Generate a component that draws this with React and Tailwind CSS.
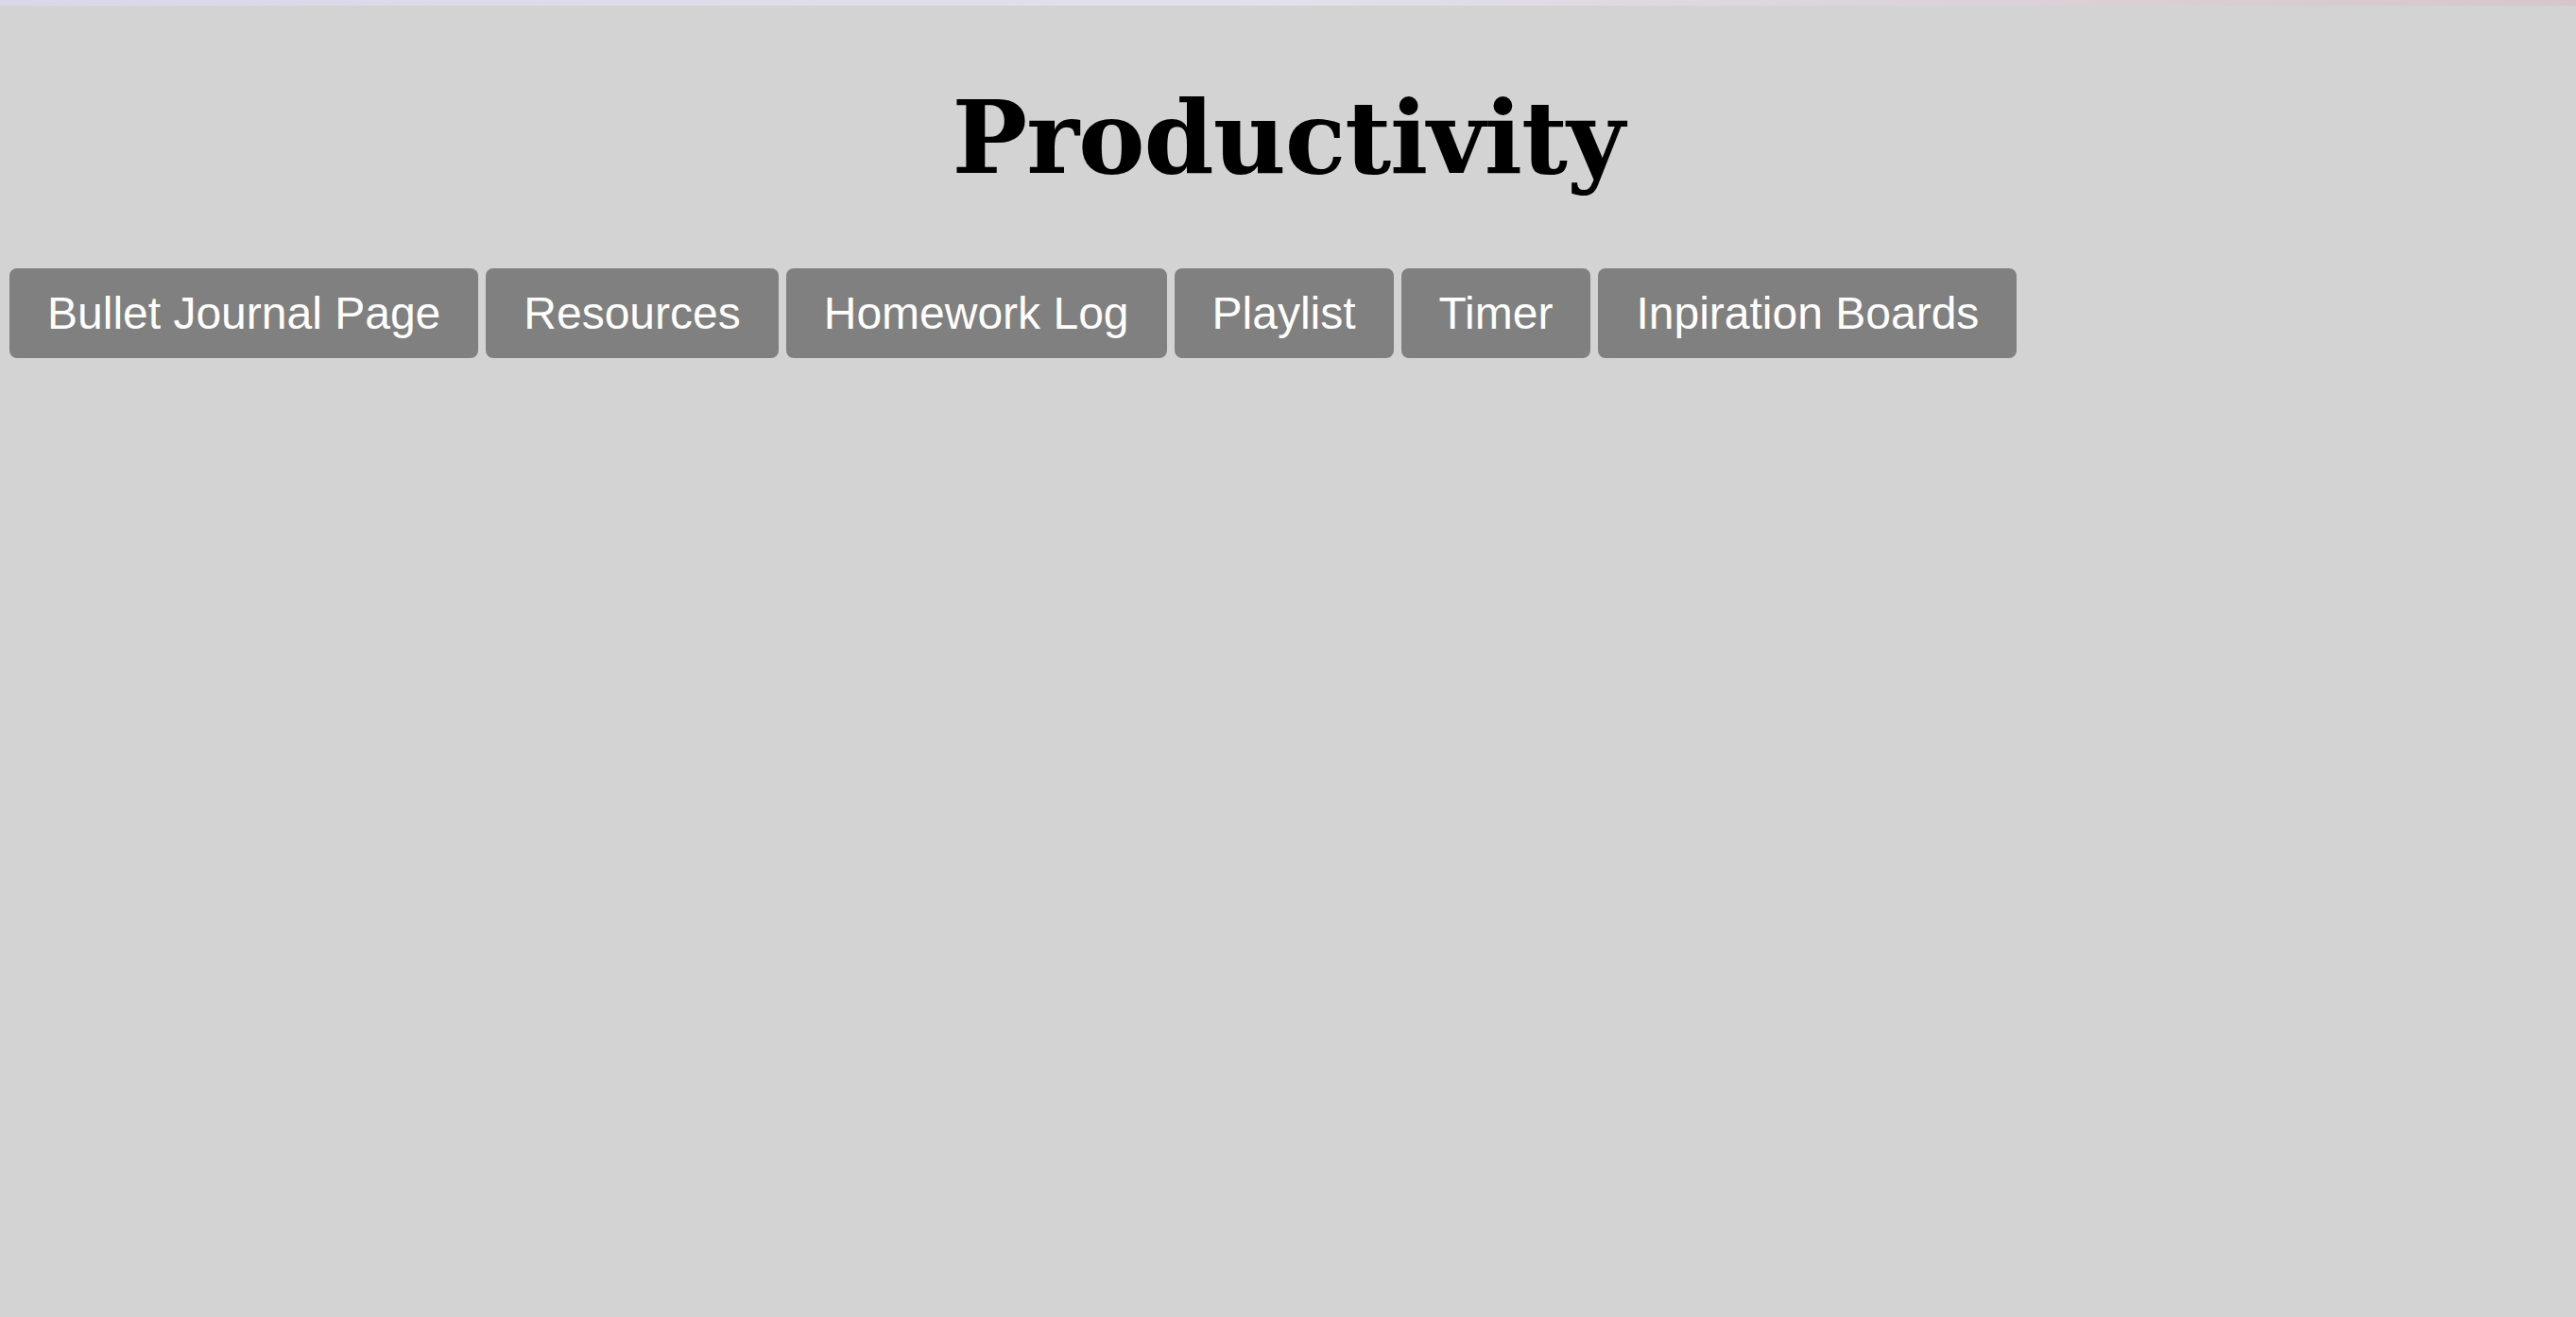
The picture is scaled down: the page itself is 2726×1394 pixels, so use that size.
const tabs = [
  'Bullet Journal Page',
  'Resources',
  'Homework Log',
  'Playlist',
  'Timer',
  'Inpiration Boards',
]

export default function App() {
  return (
    <div className="min-h-screen bg-[#d3d3d3] flex flex-col">
      {/* thin browser tint along the top edge */}
      <div className="h-[6px] bg-gradient-to-r from-[#d8d8ea] via-[#e2e0ea] to-[#d6c6ca]" />

      <h1
        className="mt-[87px] text-center text-[106px] leading-none font-bold tracking-[-0.01em] text-black"
        style={{ fontFamily: '"DejaVu Serif", "Liberation Serif", serif' }}
      >
        Productivity
      </h1>

      <nav
        className="mt-[85px] pl-[10px] flex gap-[8px]"
        style={{ fontFamily: '"Liberation Sans", Arial, sans-serif' }}
      >
        {tabs.map((tab) => (
          <button
            key={tab}
            className="bg-[#808080] text-white text-[48px] leading-[1.15] px-[40px] py-[20px] rounded-[8px] whitespace-nowrap"
          >
            {tab}
          </button>
        ))}
      </nav>
    </div>
  )
}
